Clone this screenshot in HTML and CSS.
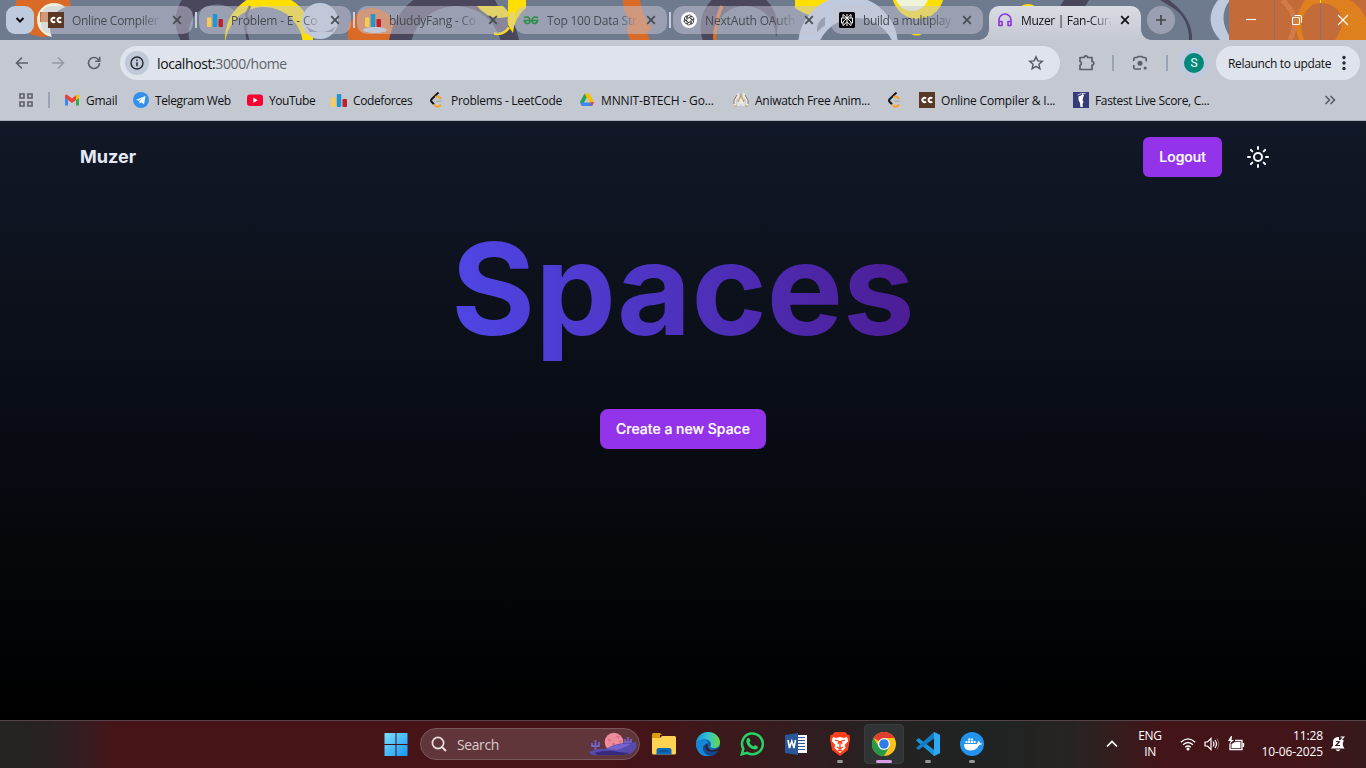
FILE: index.html
```html
<!DOCTYPE html>
<html lang="en">
<head>
<meta charset="utf-8">
<title>Muzer | Fan-Curated Music</title>
<link rel="stylesheet" href="styles.css">
</head>
<body>
<svg class="defs" width="0" height="0">
  <defs>
    <symbol id="cc" viewBox="0 0 16 16"><rect width="16" height="16" fill="#5a3825"/><path d="M7 6.500A2.100 2.100 0 1 0 7 9.500M13.200 6.500A2.100 2.100 0 1 0 13.200 9.500" fill="none" stroke="#fff" stroke-width="1.900"/></symbol>
    <symbol id="cf" viewBox="0 0 16 16"><rect x="0" y="5.500" width="4.500" height="9.500" rx="1" fill="#f8cc52"/><rect x="5.800" y="2" width="4.500" height="13" rx="1" fill="#2196cf"/><rect x="11.500" y="7" width="4.500" height="8" rx="1" fill="#c11f2b"/></symbol>
    <symbol id="lc" viewBox="0 0 16 16"><path d="M9.500 .5L2.600 7.200Q1.400 8.500 2.600 9.800L5 12.300" fill="none" stroke="#16181b" stroke-width="2"/><path d="M5 12.300Q8 17 12 12.800M6.500 5Q9 3.300 12.300 6.800" fill="none" stroke="#f7a321" stroke-width="2"/><path d="M7 9.300h6" stroke="#aeb0b2" stroke-width="1.500"/></symbol>
    <symbol id="x" viewBox="0 0 10 10"><path d="M1.200 1.200l7.600 7.600M8.800 1.200L1.200 8.800" fill="none" stroke="currentColor" stroke-width="1.700"/></symbol>
  </defs>
</svg>

<div class="screen">
  <header class="tabstrip">
    <svg class="art" width="1366" height="40" viewBox="0 0 1366 40">
      <rect width="1366" height="40" fill="#6e7a8e"/>
      <circle cx="43" cy="9" r="28" fill="#da6b27"/><circle cx="54" cy="20" r="17" fill="#eef0df"/><path d="M40 12h24v10H40z" fill="#da6b27"/><circle cx="72" cy="28" r="22" fill="#6e7a8e"/>
      <circle cx="213" cy="21" r="37.500" fill="#4a465c"/><circle cx="217" cy="33" r="28.500" fill="#6e7a8e"/>
      <circle cx="269" cy="38" r="44" fill="#ffdf00"/><circle cx="264" cy="46" r="39" fill="#6e7a8e"/><path d="M250 6l-4 9 3 6-4 6 3 13" fill="none" stroke="#4a465c" stroke-width="2.500"/>
      <circle cx="320" cy="21" r="18" fill="#c0cade"/><path d="M306 26q16 12 30 0l-4 6h-22z" fill="#6e7a8e"/><path d="M350 21v19h-2q-1-10 2-19z" fill="#da6b27"/>
      <circle cx="372" cy="31" r="23" fill="#da6b27"/><ellipse cx="375" cy="30" rx="12" ry="3" fill="#c0cade"/>
      <circle cx="454" cy="52" r="66" fill="#4a465c"/><circle cx="456" cy="52" r="46" fill="#6e7a8e"/>
      <path d="M495 0h13l6 15-4 5-9-8z" fill="#6e7a8e"/><path d="M477 6h26q6 6 7 10-14 5-24-2-6-4-9-8z" fill="#ffdf00"/>
      <path d="M508 0h18v8q-12 10-13 25-7-8-5-16z" fill="#ffdf00"/><path d="M494 33.500q10 2 15-6" fill="none" stroke="#ffdf00" stroke-width="2.500"/>
      <path d="M623 0h17q2 16 12 28l-5 5 3 7h-20q-6-14 2-18-10-10-9-22z" fill="#da6b27"/>
      <circle cx="739" cy="27" r="38.500" fill="#4a465c"/><circle cx="745" cy="37" r="31" fill="#6e7a8e"/><path d="M722 6q-5 10-5 18-3 8-2 16" fill="none" stroke="#da6b27" stroke-width="3.500"/>
      <path d="M795 0h38v6q-16 18-38 2z" fill="#ffdf00"/><circle cx="848" cy="46" r="50" fill="#c0cade"/><circle cx="856" cy="58" r="40" fill="#6e7a8e"/><path d="M817 32q-1-11 8-15v8z" fill="#6e7a8e"/>
      <circle cx="918" cy="-7" r="26" fill="#ffdf00"/><circle cx="912" cy="-6" r="17" fill="#eff3da"/><path d="M911 34h11q-5 3-11 0z" fill="#ffdf00"/><circle cx="1028" cy="15" r="11" fill="#ffdf00"/>
      <path d="M1059 8l5-8h25l-5 8zM1160 0h9q24 18 23 40h-3q0-22-16-32z" fill="#4a465c"/>
      <path d="M1218 0h12q-14 18 2 40h-12q-18-20-2-40z" fill="#c0cade"/>
      <rect x="1229" width="137" height="40" fill="#c46c39"/><path d="M1282 0q20 16 8 40" fill="none" stroke="#d27b49" stroke-width="5"/>
      <path d="M1305 0h61v40h-67q-8-20 6-40z" fill="#de801e"/><path d="M1304 40q-8-22 8-35 14-6 26 5 9 12-3 30z" fill="#c46c39"/><path d="M1350 0h16v18q-6-12-16-18z" fill="#c46c39"/>
      <path d="M1274.500 0v40M1320.500 3v37" stroke="#8a7071"/><path d="M1320.500 0v3" stroke="#ffdf00"/>
    </svg>
    <button class="tabsearch"><svg width="10" height="8" viewBox="0 0 10 8"><path d="M1.500 2L5 5.500 8.500 2" fill="none" stroke="#111" stroke-width="2"/></svg></button>
    <div class="tabs">
      <div class="tab"><svg class="i16"><use href="#cc"/></svg><span>Online Compiler</span><svg class="x"><use href="#x"/></svg></div>
      <div class="tab"><svg class="i16"><use href="#cf"/></svg><span>Problem - E - Co</span><svg class="x"><use href="#x"/></svg></div>
      <div class="tab"><svg class="i16"><use href="#cf"/></svg><span>bluddyFang - Co</span><svg class="x"><use href="#x"/></svg></div>
      <div class="tab"><svg class="i16" viewBox="0 0 16 16"><path d="M1 5.500Q6.500 3.500 7 8.500M15 5.500Q9.500 3.500 9 8.500M.5 8.500h15M1.500 8.500q0 3 3 3T7 8.500M9 8.500q0 3 2.500 3t3-3" fill="none" stroke="#2f8d46" stroke-width="1.600"/></svg><span>Top 100 Data Str</span><svg class="x"><use href="#x"/></svg></div>
      <div class="tab"><svg class="i16" viewBox="0 0 16 16"><circle cx="8" cy="8" r="8" fill="#fff"/><g fill="none" stroke="#222" stroke-width=".8"><path id="petal" d="M6 8V5.300Q6 3 8.300 3q1.500 0 2.200 1.200L8 5.700"/><use href="#petal" transform="rotate(60 8 8)"/><use href="#petal" transform="rotate(120 8 8)"/><use href="#petal" transform="rotate(180 8 8)"/><use href="#petal" transform="rotate(240 8 8)"/><use href="#petal" transform="rotate(300 8 8)"/></g></svg><span>NextAuth OAuth</span><svg class="x"><use href="#x"/></svg></div>
      <div class="tab"><svg class="i16" viewBox="0 0 16 16"><rect width="16" height="16" rx="1.500" fill="#080808"/><path d="M8 2v12M4 2.500L8 6l4-3.500V6H4zM4 6H2.500v5H4M12 6h1.500v5H12M8 6l-4 4v3.500L8 10M8 6l4 4v3.500L8 10" fill="none" stroke="#f4f4f4"/></svg><span>build a multiplay</span><svg class="x"><use href="#x"/></svg></div>
      <div class="tab active"><svg class="i16" viewBox="0 0 16 16"><path d="M2 9.500V8a6 6 0 0 1 12 0v5.500h-3v-4h3M2 9.500h3v4H2z" fill="none" stroke="#8a35dc" stroke-width="1.600" stroke-linejoin="round"/></svg><span>Muzer | Fan-Cura</span><svg class="x"><use href="#x"/></svg></div>
    </div>
    <button class="newtab"><svg width="12" height="12" viewBox="0 0 12 12"><path d="M6 1v10M1 6h10" stroke="#444" stroke-width="1.600"/></svg></button>
    <div class="wincontrols">
      <svg viewBox="0 0 12 12"><path d="M1 5.500h10"/></svg>
      <svg viewBox="0 0 12 12"><rect x="1.500" y="3.500" width="7" height="7" rx="1"/><path d="M3.500 1.500H9q1.500 0 1.500 1.500v5.500"/></svg>
      <svg viewBox="0 0 12 12"><path d="M1 1l10 10M11 1L1 11"/></svg>
    </div>
  </header>

  <div class="toolbar">
    <div class="nav">
      <svg viewBox="0 0 16 16"><path d="M14 8H3M8 2.500L2.500 8 8 13.500"/></svg>
      <svg class="dim" viewBox="0 0 16 16"><path d="M2 8h11M8 2.500L13.500 8 8 13.500"/></svg>
      <svg viewBox="0 0 16 16"><path d="M13.500 8A5.500 5.500 0 1 1 11.800 4L13.500 6M13.700 1.800v4.500H9.200"/></svg>
    </div>
    <div class="urlbar">
      <span class="info"><svg width="14" height="14" viewBox="0 0 14 14"><circle cx="7" cy="7" r="6" fill="none" stroke="#25282d" stroke-width="1.400"/><path d="M7 6.300V10.200M7 3.600v1.500" stroke="#25282d" stroke-width="1.500"/></svg></span>
      <span class="url">localhost:<i>3000/home</i></span>
      <svg class="star" width="16" height="16" viewBox="0 0 16 16"><path d="M8 1.800l1.800 4.100 4.500.4-3.400 3 1 4.400L8 11.400l-3.900 2.300 1-4.400-3.400-3 4.500-.4z" fill="none" stroke="#55585d" stroke-width="1.400"/></svg>
    </div>
    <svg class="puzzle" width="18" height="18" viewBox="0 0 18 18"><path d="M2 3.500h4.200a1.700 1.700 0 0 1 3.400 0H14v4a1.800 1.800 0 0 1 0 3.600v4.400H2v-4.200a2 2 0 0 0 0-3.800z" fill="none" stroke="#5c5f65" stroke-width="1.700" stroke-linejoin="round"/></svg>
    <i class="sep s1"></i>
    <svg class="lens" width="16" height="16" viewBox="0 0 16 16"><path d="M1.800 6V4q0-1.500 1.500-1.500h2L6 1.500h4l.7 1h2q1.500 0 1.500 1.500v2.500M1.800 10v2.500Q1.800 14 3.300 14H9" fill="none" stroke="#5c5f65" stroke-width="1.700"/><circle cx="8" cy="8.200" r="2.500" fill="#5c5f65"/><circle cx="13.200" cy="13" r="1.600" fill="#5c5f65"/></svg>
    <i class="sep s2"></i>
    <span class="avatar"><b>S</b></span>
    <div class="relaunch"><span>Relaunch to update</span><svg width="4" height="16" viewBox="0 0 4 16"><g fill="#25282d"><circle cx="2" cy="2.500" r="1.700"/><circle cx="2" cy="8" r="1.700"/><circle cx="2" cy="13.500" r="1.700"/></g></svg></div>
  </div>

  <div class="bookmarks">
    <svg class="apps" width="16" height="16" viewBox="0 0 16 16"><path d="M2 2h4v4H2zM10 2h4v4h-4zM2 10h4v4H2zM10 10h4v4h-4z" fill="none" stroke="#5c5f65" stroke-width="1.600"/></svg>
    <i class="sep"></i>
    <div class="marks">
      <div><svg class="i16" viewBox="0 0 16 16"><path d="M1 4v9.500h3V8z" fill="#4285f4"/><path d="M15 4v9.500h-3V8z" fill="#34a853"/><path d="M1 3.500Q2 2 3.500 3L8 6.500 12 3.300V8L8 11 4 8 1 5.500z" fill="#ea4335"/><path d="M12 3.200q2-1.500 3 .6V6l-3 2.300z" fill="#fbbc04"/></svg><span>Gmail</span></div>
      <div><svg class="i16" viewBox="0 0 16 16"><circle cx="8" cy="8" r="8" fill="#3391ea"/><path d="M3.200 7.800L12.500 4 11 12.300 8 10.200l-1.500 1.500-.2-2.500L10 6 5.500 8.700z" fill="#fff"/></svg><span>Telegram Web</span></div>
      <div><svg class="i16" viewBox="0 0 16 16"><rect y="2.500" width="16" height="11.500" rx="3" fill="#f80030"/><path d="M6.300 5.600v5.200l4.500-2.600z" fill="#fff"/></svg><span>YouTube</span></div>
      <div><svg class="i16"><use href="#cf"/></svg><span>Codeforces</span></div>
      <div><svg class="i16"><use href="#lc"/></svg><span>Problems - LeetCode</span></div>
      <div><svg class="i16" viewBox="0 0 16 16"><path d="M5.500 1.500L1 10l2 4 5-9z" fill="#23a259"/><path d="M5.500 1.500h5L15 10h-4.500z" fill="#fbbc04"/><path d="M1 10.500h14L13 14H3z" fill="#4285f4"/><path d="M11 10.300h4L13 14z" fill="#ea4335"/></svg><span>MNNIT-BTECH - Go...</span></div>
      <div><svg class="i16" viewBox="0 0 16 16"><path d="M2 14V8l3-5 3 8 3-8 3 5v6M5.500 14V9M10.500 14V9" fill="none" stroke="#eceae5" stroke-width="2.300"/><path d="M5 10l3-7 3 7M1 14h3M12 14h3" fill="none" stroke="#bf9e5e" stroke-width="1.200"/><path d="M1 12V8l3-5M15 12V8l-3-5" fill="none" stroke="#777"/></svg><span>Aniwatch Free Anim...</span></div>
      <div><svg class="i16"><use href="#lc"/></svg></div>
      <div><svg class="i16"><use href="#cc"/></svg><span>Online Compiler &amp; I...</span></div>
      <div><svg class="i16" viewBox="0 0 16 16"><rect width="16" height="16" fill="#363c78"/><path d="M5.500 4.500L8 3.500l1.500-1.500 1.500 1-1 3-.5 2 1 2-1 2 .3 3H7.500L7 11 5.500 8z" fill="#fff"/><path d="M4.500 3q4-2.500 8-1.500" fill="none" stroke="#c4c8dc"/></svg><span>Fastest Live Score, C...</span></div>
    </div>
    <svg class="more" width="12" height="10" viewBox="0 0 12 10"><path d="M1.500 1l4 4-4 4M6.500 1l4 4-4 4" fill="none" stroke="#55585d" stroke-width="1.500"/></svg>
  </div>

  <main class="page">
    <nav class="appbar">
      <strong>Muzer</strong>
      <button class="btn">Logout</button>
      <svg class="sun" width="24" height="24" viewBox="0 0 24 24"><circle cx="12" cy="12" r="4"/><path d="M12 2v2M12 20v2M4.930 4.930l1.410 1.410M17.660 17.660l1.410 1.410M2 12h2M20 12h2M6.340 17.660l-1.410 1.410M19.070 4.930l-1.410 1.410"/></svg>
    </nav>
    <h1>Spaces</h1>
    <button class="btn create">Create a new Space</button>
  </main>

  <footer class="taskbar">
    <div class="center">
      <div class="app"><svg width="24" height="24" viewBox="0 0 24 24"><defs><linearGradient id="w" x2="1" y2="1"><stop stop-color="#7be0ff"/><stop offset="1" stop-color="#1596f5"/></linearGradient></defs><path d="M.5 1H11.500V12H.5zM12.500 1H23.500V12H12.500zM.5 13H11.500V24H.5zM12.500 13H23.500V24H12.500z" fill="url(#w)"/></svg></div>
      <div class="search">
        <svg width="16" height="16" viewBox="0 0 16 16"><circle cx="7" cy="7" r="5.600" fill="none" stroke="#e8dede" stroke-width="1.700"/><path d="M11 11l4 4" stroke="#e8dede" stroke-width="2"/></svg>
        <span>Search</span>
        <svg class="scene" width="48" height="24" viewBox="0 0 48 24"><circle cx="25" cy="10" r="9.300" fill="#ee8c9c"/><path d="M19 7l3 2M28 4l2 2M23 12h3M30 9l2 1" stroke="#d87088" stroke-width="2"/><path d="M6.500 19V8M3 11v3h7v-4M39 14V5M36 7v3h6V7" fill="none" stroke="#7460c8" stroke-width="1.800"/><path d="M0 20q8-4 17-3 8-5 18-6 7 0 12-1 2 8-6 12-20 2-36 1-4 0-5-3z" fill="#574aae"/><path d="M17 17q12-6 25-5-10 5-14 6z" fill="#7663cc"/><path d="M5 21q14-4 24-1l12 1-7 2H9z" fill="#352a7b"/></svg>
      </div>
      <div class="app"><svg width="24" height="24" viewBox="0 0 24 24"><path d="M0 2.500Q0 1 1.500 1H8l2 2h-2v4H0z" fill="#d89c0d"/><path d="M0 6h8l2-2h12.500Q24 4 24 5.500V21q0 1.500-1.500 1.500h-21Q0 22.500 0 21z" fill="#ffd252"/><path d="M4.500 22.500V18q0-2 2-2h11q2 0 2 2v4.500z" fill="#0c68b6"/><path d="M7.500 19h9" stroke="#054c8e" stroke-width="1.500"/></svg></div>
      <div class="app"><svg width="24" height="24" viewBox="0 0 24 24"><defs><linearGradient id="e" x2="1"><stop stop-color="#1693dc"/><stop offset=".5" stop-color="#35c1d0"/><stop offset="1" stop-color="#68d846"/></linearGradient></defs><circle cx="12" cy="12" r="12" fill="#0d61b2"/><path d="M0 11C1 4 6 0 12 0c7 0 12 5 12 10 0 7-7 7-10 5 4-6-5-12-14-4z" fill="url(#e)"/><path d="M0 11c6-5 13-3 12 0-6 1-5 13 4 12Q5 27 1 17-.3 14 0 11z" fill="#1687d5"/><path d="M11 12q-3 7 5 8 4 .5 7-2-3 5-8 6-9-2-8-9 1-3 4-3z" fill="#104a8e"/><path d="M12.500 11q-3 5 2 7 5 1 9.500-3l1 3-3 1-6 1q-8-1-6-7z" fill="#331d2b"/></svg></div>
      <div class="app"><svg width="24" height="24" viewBox="0 0 24 24"><path d="M1.800 22.300l1.500-5.500A10.400 10.400 0 1 1 7.200 20.800z" fill="none" stroke="#25d366" stroke-width="2.500"/><path d="M7.200 6.500q1.300-1.600 2.300 0l.9 2q.3.800-1 2.100 1.400 2.800 4.200 4l1.400-1.500 2.800 1.400q.4 3-2.800 3.100-7-.8-8.700-7.500-.3-1.900.9-3.600z" fill="#25d366"/></svg></div>
      <div class="app"><svg width="24" height="24" viewBox="0 0 24 24"><path d="M12 3h11v18H12z" fill="#f8fafc"/><path d="M14 5.500h7M14 8.500h7M14 11.500h7M14 14.500h7M14 17.500h7" stroke="#2b579a" stroke-width="1.200"/><path d="M1 3l13-2v22L1 21z" fill="#2b579a"/><path d="M4 8l1.500 8L7.800 9l2.200 7L11.500 8" fill="none" stroke="#fff" stroke-width="1.600"/></svg></div>
      <div class="app run"><svg width="24" height="24" viewBox="0 0 24 24"><path d="M7 0h10l3 3 1.500-.3L22 7l-2 11-8 6-8-6L2 7l.5-4.300L4 3z" fill="#f9401a"/><path d="M5 5l3 1 4-1 4 1 3-1 1.300 4-3.600 4 .8 3L12 21l-5.500-5 .8-3L3.700 9z" fill="#fff"/><path d="M7 8l4 1.500L10 12M17 8l-4 1.500L14 12M12 9v7M9 15l3 2 3-2M10 18.500h4" fill="none" stroke="#f9401a" stroke-width="1.300"/></svg></div>
      <div class="app run current"><svg width="24" height="24" viewBox="0 0 24 24"><circle cx="12" cy="12" r="12" fill="#fcc31e"/><path d="M12 12L1.600 6A12 12 0 0 1 22.400 6H12z" fill="#e33b2e"/><path d="M1.600 6A12 12 0 0 0 12 24l5.200-9L12 12 6.800 15z" fill="#249a48"/><circle cx="12" cy="12" r="6" fill="#fff"/><circle cx="12" cy="12" r="4.800" fill="#2f7de9"/></svg></div>
      <div class="app run"><svg width="24" height="24" viewBox="0 0 24 24"><path d="M18 0l6 3v18l-6 3L0 8.500 2.500 6 18 17.800z" fill="#1c91dc"/><path d="M0 16L18 0v6.500L2.500 18z" fill="#157bc3"/><path d="M18 0l6 3v18l-6 3z" fill="#2eaaf2"/></svg></div>
      <div class="app run"><svg width="24" height="24" viewBox="0 0 24 24"><circle cx="12" cy="12" r="12" fill="#2294ee"/><path d="M4 12h13q.6-2.800 1.800-3 1.200 1 1.200 2.200l2.200.3q-.8 1.700-3.200 1.700Q16.500 18.500 10 18.500 4 18.500 4 12z" fill="#fff"/><path d="M5.500 9h2v2h-2zM8.200 9h2v2h-2zM10.900 9h2v2h-2zM13.600 9h2v2h-2zM8.200 6.500h2v2h-2zM10.900 6.500h2v2h-2z" fill="#fff"/></svg></div>
    </div>
    <div class="tray">
      <svg class="up" width="12" height="8" viewBox="0 0 12 8"><path d="M1 6.500l5-5 5 5" fill="none" stroke="#fff" stroke-width="1.600"/></svg>
      <div class="lang">ENG<br>IN</div>
      <div class="status">
        <svg width="16" height="16" viewBox="0 0 16 16"><path d="M.8 6.200q7.200-6.600 14.400 0M3 8.800q5-4.600 10 0M5.300 11.200q2.700-2.400 5.400 0" fill="none" stroke="#fff" stroke-width="1.300"/><circle cx="8" cy="13" r="1.500" fill="#fff"/></svg>
        <svg width="16" height="16" viewBox="0 0 16 16"><path d="M1 6h2.500L7 2.500v11L3.500 10H1zM9 5.500q2 2.500 0 5M11 4q3 4 0 8" fill="none" stroke="#fff" stroke-width="1.200"/><path d="M13 2.500q3.600 5.500 0 11" fill="none" stroke="#8c6368"/></svg>
        <svg width="17" height="16" viewBox="0 0 17 16"><path d="M2 7.500v6h12v-9H7" fill="none" stroke="#fff" stroke-width="1.300"/><path d="M3.500 8L7 6h5.500v6h-9zM14.500 7h1.700v4h-1.700zM3 0L0 5h2.500L1.500 8 6 4H3.500L4 0z" fill="#fff"/></svg>
      </div>
      <div class="clock">11:28<br>10-06-2025</div>
      <svg class="bell" width="16" height="16" viewBox="0 0 16 16"><path d="M1 12.500l2-3V6q0-4.500 5-5h1v3h4l-.2 5.500 1.700 3zM5.500 13.500h5q-2.500 3.500-5 0z" fill="#fff"/><path d="M6 5.500h3.500L6 9.500h4" fill="none" stroke="#45151b" stroke-width="1.200"/><path d="M10.500 1h3.200l-3.200 4H14" fill="none" stroke="#fff" stroke-width="1.200"/></svg>
    </div>
  </footer>
</div>
</body>
</html>
```
FILE: styles.css
```css
* { box-sizing: border-box; }
body { margin: 0; overflow: hidden; background: #000; }
button { border: 0; padding: 0; margin: 0; font: inherit; }
.defs { position: absolute; }
.screen { width: 1366px; height: 768px; display: flex; flex-direction: column; font: 12px "Open Sans", "Noto Sans", sans-serif; color: #101214; }
svg { flex: none; display: block; }
.i16 { width: 16px; height: 16px; }

.tabstrip { position: relative; height: 40px; display: flex; align-items: flex-start; overflow: hidden; }
.art { position: absolute; left: 0; top: 0; }
.tabsearch, .tabs, .newtab, .wincontrols { position: relative; }
.tabsearch { width: 28px; height: 28px; margin: 6px 7px 0 6px; border-radius: 9px; background: #c0cade; display: flex; align-items: center; justify-content: center; }
.tabs { display: flex; gap: 6px; margin-top: 6px; }
.tab { position: relative; width: 152px; height: 28px; border-radius: 10px; background: rgba(198, 198, 212, .5); display: flex; align-items: center; padding-left: 8px; color: #484b52; }
.tab:first-child { padding-left: 7px; }
.tab:first-child .x { margin-left: 10px; }
.tab > span { width: 90px; margin-left: 8px; white-space: nowrap; letter-spacing: -.3px; font-size: 12px; -webkit-mask-image: linear-gradient(90deg, #000 76%, transparent 102%); mask-image: linear-gradient(90deg, #000 76%, transparent 102%); }
.tab:nth-child(2) > span { letter-spacing: -.18px; }
.tab:nth-child(5) > span { letter-spacing: -.15px; }
.tab:nth-child(3) > span, .tab:nth-child(4) > span { letter-spacing: -.22px; }
.tab .x { width: 10px; height: 10px; margin-left: 9px; }
.tab:nth-child(-n+4)::after { content: ""; position: absolute; right: -4px; top: 6px; width: 2px; height: 16px; background: #c8cedb; }
.tab.active { height: 34px; padding-bottom: 6px; border-radius: 10px 10px 0 0; background: linear-gradient(#dadce3, #c4c8d1); color: #101214; }
.tab.active::before, .tab.active::after { content: ""; position: absolute; bottom: 0; top: auto; width: 10px; height: 10px; }
.tab.active::before { left: -10px; background: radial-gradient(circle at 0 0, transparent 9.500px, #c4c8d1 10px); }
.tab.active::after { right: -10px; background: radial-gradient(circle at 100% 0, transparent 9.500px, #c4c8d1 10px); }
.newtab { width: 28px; height: 28px; margin: 6px 0 0 6px; border-radius: 14px; background: #9aa0b0; display: flex; align-items: center; justify-content: center; }
.wincontrols { margin-left: auto; height: 40px; display: flex; }
.wincontrols svg { width: 46px; height: 12px; margin-top: 14px; fill: none; stroke: #fff; stroke-width: 1.100; }

.toolbar { height: 40px; background: #c4c8d1; display: flex; align-items: center; padding: 6px 6px 0 14px; }
.nav { display: flex; gap: 20px; margin-right: 18px; }
.nav svg { width: 16px; height: 16px; fill: none; stroke: #5c5f65; stroke-width: 1.600; }
.nav .dim { stroke: #979aa2; }
.urlbar { width: 940px; height: 34px; border-radius: 17px; background: #dfe3eb; display: flex; align-items: center; padding: 0 16px 0 5px; }
.info { width: 24px; height: 24px; border-radius: 12px; background: #c0c9da; display: flex; align-items: center; justify-content: center; }
.url { margin-left: 8px; font-size: 14px; letter-spacing: -.4px; }
.url i { font-style: normal; color: #5e626a; }
.star { margin-left: auto; }
.puzzle { margin-left: 18px; }
.sep { width: 2px; height: 16px; background: #9aa3b5; flex: none; }
.s1 { margin: 0 18px 0 16px; }
.s2 { margin: 0 10px 0 18px; }
.avatar { width: 32px; height: 32px; border-radius: 16px; background: #bfc9db; display: flex; align-items: center; justify-content: center; }
.avatar b { width: 20px; height: 20px; border-radius: 10px; background: #00897b; color: #fff; font: 400 12px/20px Roboto, sans-serif; text-align: center; }
.relaunch { margin-left: auto; width: 144px; height: 34px; border-radius: 17px; background: #dfe3eb; display: flex; align-items: center; padding: 0 14px 0 12px; justify-content: space-between; white-space: nowrap; letter-spacing: -.33px; }

.bookmarks { height: 41px; background: #c4c8d1; border-bottom: 1px solid #a7abb5; display: flex; align-items: center; padding: 0 30px 0 18px; }
.bookmarks .sep { margin: 0 15px 0 14px; }
.marks { display: flex; gap: 17px; }
.marks div { display: flex; gap: 6px; align-items: center; white-space: nowrap; letter-spacing: -.28px; }
.marks div:nth-child(1) { width: 51px; margin-left: -1px; }
.marks div:nth-child(2) { width: 97px; letter-spacing: -.4px; }
.marks div:nth-child(3) { width: 67px; letter-spacing: -.45px; }
.marks div:nth-child(4) { width: 81px; letter-spacing: -.4px; }
.marks div:nth-child(5) { width: 133px; }
.marks div:nth-child(6) { width: 137px; letter-spacing: -.15px; }
.marks div:nth-child(7) { width: 137px; }
.marks div:nth-child(8) { width: 15px; }
.marks div:nth-child(9) { width: 137px; letter-spacing: -.2px; }
.marks div:nth-child(10) { letter-spacing: -.33px; }
.marks div:nth-child(n+2) { margin-right: 0; }
.marks div:nth-child(2) { margin-left: 1px; }
.more { margin-left: auto; }

.page { height: 599px; background: linear-gradient(#111827, #000); display: flex; flex-direction: column; align-items: center; font-family: Inter, sans-serif; }
.appbar { width: 1206px; height: 72px; display: flex; align-items: center; padding-right: 16px; }
.appbar strong { flex: 1; margin-bottom: 2px; font-size: 18px; font-weight: 700; color: #e5e9f5; }
.btn { height: 40px; border-radius: 6px; padding: 0 16px 1px; background: #9333ea; color: #fff; font-size: 14px; font-weight: 500; -webkit-text-stroke: .2px #fff; }
.sun { margin: 0 0 0 24px; fill: none; stroke: #f8fafc; stroke-width: 2; stroke-linecap: round; }
h1 { margin: 32px 0 0; padding-bottom: 12px; font-size: 128px; line-height: 128px; font-weight: 700; letter-spacing: 0; color: transparent; background: linear-gradient(90deg, #4f46e5, #4c1d95); -webkit-background-clip: text; background-clip: text; }
.create { margin-top: 44px; border-radius: 8px; }

.taskbar { height: 48px; border-top: 1px solid #554447; background: linear-gradient(90deg, #242323 0, #2a2121 4%, #381b1f 6.500%, #461417 8.500%, #461317 45%, #3b191c 54%, #242222 65%, #1e2422 73%, #292321 79%, #431418 85%, #431519 95%, #35191c 100%); color: #fff; display: flex; align-items: center; padding-bottom: 1px; }
.center { display: flex; align-items: center; gap: 4px; margin-left: 375.500px; }
.app { position: relative; width: 40px; height: 40px; border-radius: 4px; display: flex; align-items: center; justify-content: center; }
.search { width: 220px; height: 32px; margin: 0 0 0 .5px; border: 1px solid #79565a; border-radius: 16px; background: #61363b; display: flex; align-items: center; gap: 10px; padding: 0 2px 0 10px; font-size: 14px; color: #d9cccd; letter-spacing: -.4px; }
.scene { margin-left: auto; }
.run::after { content: ""; position: absolute; bottom: 1px; left: 17px; width: 6px; height: 3px; border-radius: 2px; background: #98999a; }
.current { background: #303434; border: 1px solid #393d3d; }
.current::after { left: 11px; bottom: 0; width: 16px; background: #dc9de7; }
.tray { margin-left: auto; display: flex; align-items: center; padding-right: 20px; line-height: 16px; letter-spacing: -.35px; }
.lang { margin: 0 18px 0 20px; width: 24px; text-align: center; }
.status { display: flex; gap: 8px; }
.clock { width: 66px; margin: 0 7px 0 12px; display: flex; flex-direction: column; align-items: flex-end; text-align: right; letter-spacing: -.12px; white-space: nowrap; }
```
